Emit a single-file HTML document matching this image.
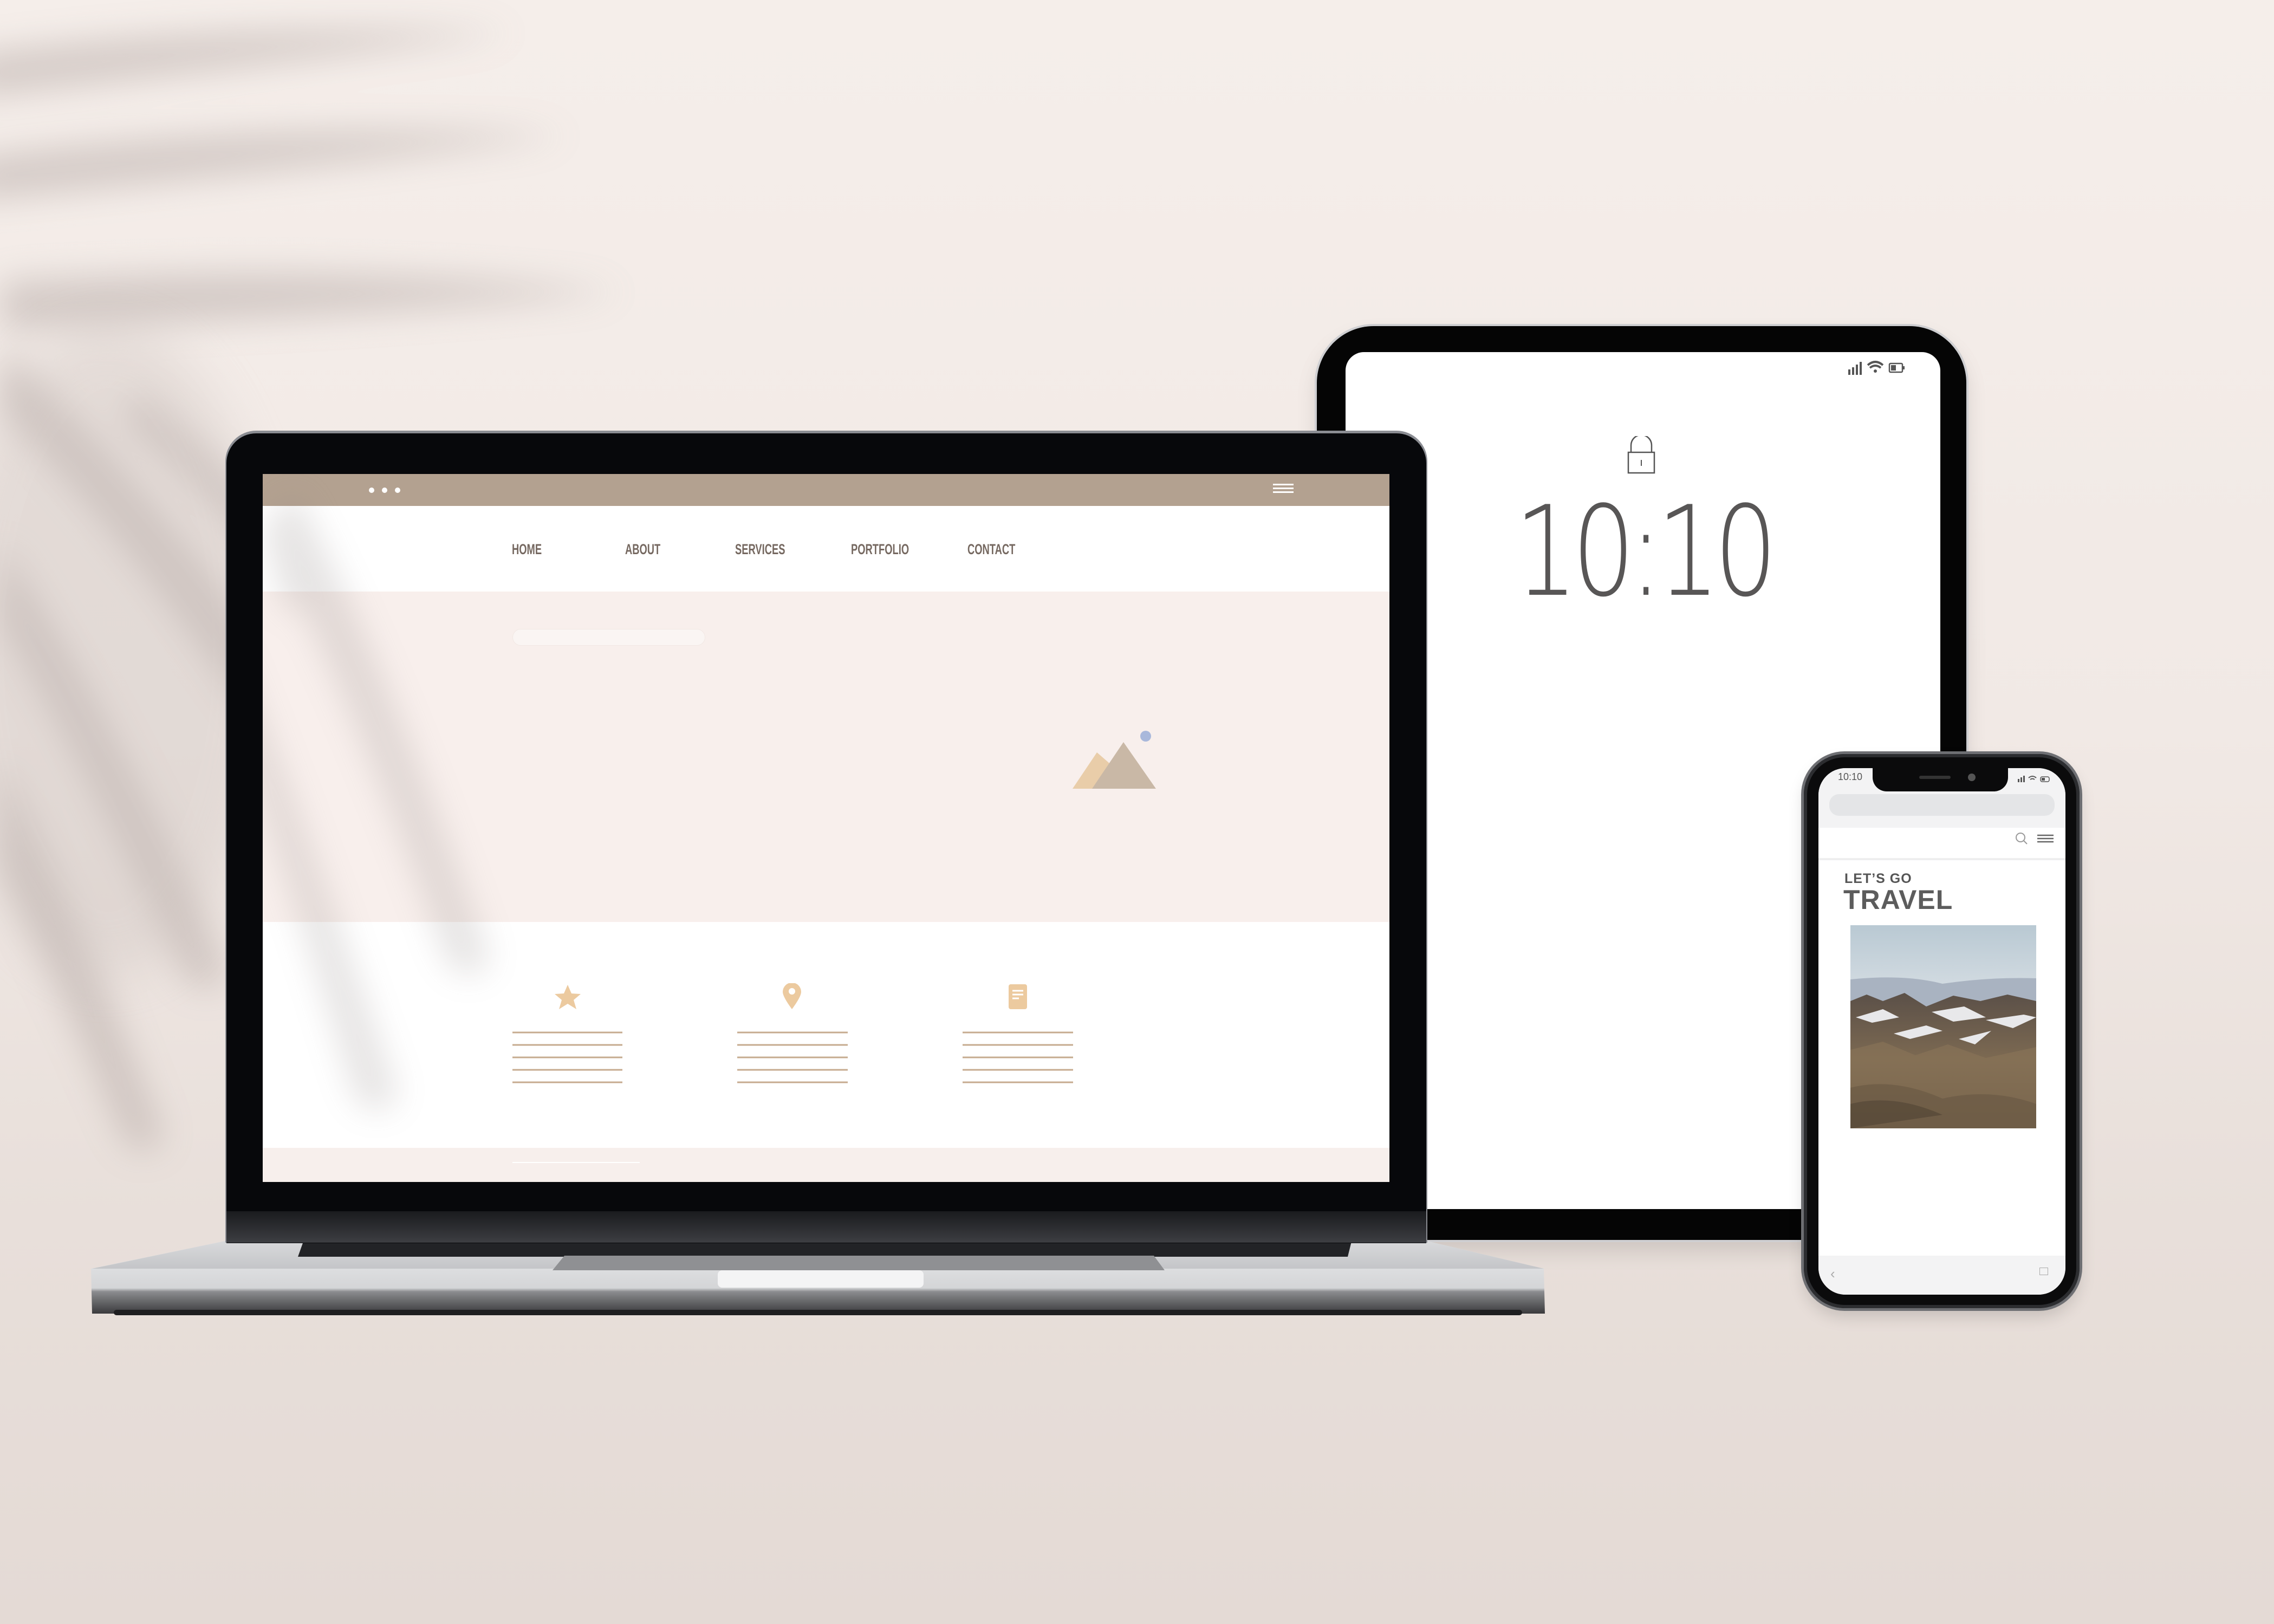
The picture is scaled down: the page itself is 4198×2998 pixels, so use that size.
<!DOCTYPE html>
<html><head><meta charset="utf-8"><style>
*{margin:0;padding:0;box-sizing:border-box}
body{width:4198px;height:2998px;overflow:hidden;position:relative;background:linear-gradient(180deg,#f5eeea 0%,#f1e9e5 45%,#e8dfda 75%,#e4dad5 100%);font-family:"Liberation Sans",sans-serif}
.a{position:absolute}
.nv{position:absolute;display:inline-block;transform:scaleX(0.68);transform-origin:0 0;white-space:nowrap}
</style></head><body>

<!-- palm shadow -->
<svg class="a" style="left:0;top:0" width="4198" height="2998">
<defs><filter id="b" x="-50%" y="-50%" width="200%" height="200%"><feGaussianBlur stdDeviation="32"/></filter>
<filter id="b2" x="-50%" y="-50%" width="200%" height="200%"><feGaussianBlur stdDeviation="45"/></filter></defs>
<g fill="#a89b98" opacity="0.42" filter="url(#b)">
<path d="M-50 100 Q400 40 950 60 Q500 120 -50 180Z"/>
<path d="M-50 290 Q500 220 1050 250 Q500 320 -50 370Z"/>
<path d="M0 520 Q600 480 1150 540 Q600 590 0 610Z"/>
<path d="M0 640 Q300 900 700 1500 Q650 1600 580 1500 Q250 1000 0 760Z"/>
<path d="M250 720 Q600 1000 900 1500 Q870 1580 820 1500 Q500 1000 230 780Z"/>
<path d="M0 1000 Q200 1300 420 1800 Q380 1850 340 1800 Q150 1400 0 1150Z"/>
<path d="M0 1400 Q150 1700 300 2100 Q260 2150 230 2100 Q100 1800 0 1600Z"/>
</g>
<ellipse cx="200" cy="1200" rx="300" ry="600" fill="#c9bfbb" opacity="0.35" filter="url(#b2)"/>
</svg>

<!-- TABLET -->
<div class="a" style="left:2431px;top:602px;width:1199px;height:1687px;background:#050505;border-radius:105px;box-shadow:0 0 0 4px #cfcfd2,0 20px 40px rgba(0,0,0,0.12)"></div>
<div class="a" style="left:2484px;top:650px;width:1098px;height:1582px;background:#fff;border-radius:34px"></div>
<svg class="a" style="left:3400px;top:660px" width="180" height="40">
<g fill="#555"><rect x="12" y="22" width="4" height="10"/><rect x="19" y="18" width="4" height="14"/><rect x="26" y="13" width="4" height="19"/><rect x="33" y="8" width="4" height="24"/></g>
<path d="M48 14 Q62 2 76 14 M52 19 Q62 11 72 19" stroke="#555" stroke-width="4" fill="none"/><circle cx="62" cy="25" r="3" fill="#555"/>
<rect x="88" y="11" width="24" height="16" rx="2" stroke="#555" stroke-width="2.5" fill="none"/><rect x="91" y="14" width="9" height="10" fill="#555"/><rect x="113" y="16" width="3" height="6" fill="#555"/>
</svg>
<svg class="a" style="left:3002px;top:805px" width="56" height="70">
<path d="M9 30 V17 A19 19 0 0 1 47 17 V30" stroke="#555" stroke-width="2.5" fill="none"/>
<rect x="4" y="30" width="48" height="38" stroke="#555" stroke-width="2.5" fill="#fff"/>
<line x1="28" y1="44" x2="28" y2="55" stroke="#555" stroke-width="2"/></svg>
<div class="a" style="left:2484px;top:880px;width:1098px;text-align:center;font-size:230px;line-height:280px;color:#585656;font-family:'DejaVu Sans','Liberation Sans',sans-serif;font-weight:200;letter-spacing:-14px;transform:scaleX(0.8)">10:10</div>

<!-- LAPTOP base -->
<svg class="a" style="left:150px;top:2200px" width="2720" height="240">
<defs><linearGradient id="deck" x1="0" y1="0" x2="0" y2="1"><stop offset="0" stop-color="#d9dadc"/><stop offset="1" stop-color="#c4c5c8"/></linearGradient>
<linearGradient id="front" x1="0" y1="0" x2="0" y2="1"><stop offset="0" stop-color="#e9eaec"/><stop offset="0.65" stop-color="#d4d5d7"/><stop offset="0.7" stop-color="#8b8c8f"/><stop offset="1" stop-color="#3a3a3c"/></linearGradient></defs>
<path d="M270 90 L2480 90 L2700 142 L2702 225 L20 225 L18 142Z" fill="url(#front)"/>
<path d="M270 90 L2480 90 L2700 142 L20 142Z" fill="url(#deck)"/>
<rect x="270" y="10" width="2210" height="85" fill="#1b1c1f"/>
<path d="M410 92 L2345 92 L2338 120 L400 120Z" fill="#222326"/>
<path d="M892 118 L1980 118 L2000 145 L870 145Z" fill="#8f9093"/>
<rect x="1175" y="145" width="380" height="32" rx="8" fill="#f4f4f5"/>
<rect x="60" y="218" width="2600" height="10" rx="5" fill="#1e1e20"/>
</svg>

<!-- LAPTOP lid -->
<div class="a" style="left:418px;top:800px;width:2215px;height:1495px;background:#07080b;border-radius:55px 55px 0 0;box-shadow:0 -3px 0 2px #8b8d93"></div>
<div class="a" style="left:418px;top:2236px;width:2215px;height:58px;background:linear-gradient(#1a1b1e,#3d3e42)"></div>
<div class="a" style="left:485px;top:875px;width:2080px;height:1307px;background:#fff;overflow:hidden">
 <div class="a" style="left:0;top:0;width:2080px;height:59px;background:#b3a190"></div>
 <div class="a" style="left:196px;top:25px;width:10px;height:10px;border-radius:50%;background:#fff"></div>
 <div class="a" style="left:220px;top:25px;width:10px;height:10px;border-radius:50%;background:#fff"></div>
 <div class="a" style="left:244px;top:25px;width:10px;height:10px;border-radius:50%;background:#fff"></div>
 <div class="a" style="left:1865px;top:18px;width:38px;height:3px;background:#fff;box-shadow:0 7px 0 #fff,0 14px 0 #fff"></div>
 <div class="a" style="left:0;top:59px;width:2080px;height:158px;background:#fff"></div>
 <div class="a" style="top:124px;left:0;width:2080px;font-size:27px;color:#756860;font-weight:bold">
  <span class="nv" style="left:460px">HOME</span><span class="nv" style="left:669px">ABOUT</span><span class="nv" style="left:872px">SERVICES</span><span class="nv" style="left:1086px">PORTFOLIO</span><span class="nv" style="left:1301px">CONTACT</span></div>
 <div class="a" style="left:0;top:217px;width:2080px;height:610px;background:#f8efec"></div>
 <div class="a" style="left:461px;top:286px;width:356px;height:31px;border-radius:16px;background:#faf5f3;border:1px solid #f1e8e4"></div>
 <svg class="a" style="left:1480px;top:470px" width="180" height="120">
  <path d="M15 111 L60 44 L90 70 L105 111Z" fill="#e9cda9"/>
  <path d="M51 111 L109 25 L169 111Z" fill="#c9b8a6"/>
  <circle cx="150" cy="14" r="10" fill="#a9b8db"/></svg>
 <div class="a" style="left:0;top:827px;width:2080px;height:417px;background:#fff"></div>
 <svg class="a" style="left:0;top:940px" width="2080" height="200">
  <path d="M563 3 L570 19 L587 20 L574 31 L579 48 L563 38 L547 48 L552 31 L539 20 L556 19Z" fill="#ecca9f"/>
  <path d="M977 48 Q960 25 960 16 A17 17 0 0 1 994 16 Q994 25 977 48Z" fill="#ecca9f"/><circle cx="977" cy="15" r="6" fill="#fff"/>
  <rect x="1377" y="2" width="34" height="46" rx="4" fill="#ecca9f"/>
  <g stroke="#fff" stroke-width="3"><line x1="1384" y1="14" x2="1404" y2="14"/><line x1="1384" y1="21" x2="1404" y2="21"/><line x1="1384" y1="28" x2="1396" y2="28"/></g>
  <g stroke="#c6ab8f" stroke-width="3">
   <line x1="461" y1="91" x2="664" y2="91"/><line x1="461" y1="114" x2="664" y2="114"/><line x1="461" y1="137" x2="664" y2="137"/><line x1="461" y1="160" x2="664" y2="160"/><line x1="461" y1="183" x2="664" y2="183"/>
   <line x1="876" y1="91" x2="1080" y2="91"/><line x1="876" y1="114" x2="1080" y2="114"/><line x1="876" y1="137" x2="1080" y2="137"/><line x1="876" y1="160" x2="1080" y2="160"/><line x1="876" y1="183" x2="1080" y2="183"/>
   <line x1="1292" y1="91" x2="1496" y2="91"/><line x1="1292" y1="114" x2="1496" y2="114"/><line x1="1292" y1="137" x2="1496" y2="137"/><line x1="1292" y1="160" x2="1496" y2="160"/><line x1="1292" y1="183" x2="1496" y2="183"/></g></svg>
 <div class="a" style="left:0;top:1244px;width:2080px;height:63px;background:#f7efec"></div>
 <div class="a" style="left:461px;top:1270px;width:235px;height:2px;background:#fff"></div>
 <svg class="a" style="left:0;top:0" width="2080" height="1307"><defs><filter id="b3" x="-50%" y="-50%" width="200%" height="200%"><feGaussianBlur stdDeviation="30"/></filter></defs>
 <g fill="#8f8684" opacity="0.22" filter="url(#b3)">
 <path d="M60 30 Q250 400 420 900 Q380 950 340 900 Q180 450 0 100Z"/>
 <path d="M-60 300 Q100 700 250 1150 Q210 1200 170 1150 Q50 750 -60 450Z"/>
 <path d="M0 100 Q60 100 100 250 L40 250Z"/></g></svg>
</div>

<!-- PHONE -->
<div class="a" style="left:3330px;top:1392px;width:509px;height:1023px;background:#0b0b0c;border-radius:75px;box-shadow:0 0 0 5px #6e6f73,inset 0 0 0 6px #2c2d30,0 15px 30px rgba(0,0,0,0.15)"></div>
<div class="a" style="left:3357px;top:1418px;width:456px;height:972px;background:#fff;border-radius:50px;overflow:hidden">
 <div class="a" style="left:0;top:0;width:456px;height:110px;background:#f3f3f4"></div>
 <div class="a" style="left:20px;top:48px;width:416px;height:40px;border-radius:18px;background:#e4e5e7"></div>
 <div class="a" style="left:100px;top:-2px;width:250px;height:45px;background:#0b0b0c;border-radius:0 0 26px 26px"></div>
 <div class="a" style="left:186px;top:14px;width:58px;height:6px;border-radius:3px;background:#333"></div>
 <div class="a" style="left:276px;top:10px;width:14px;height:14px;border-radius:50%;background:#555"></div>
 <div class="a" style="left:36px;top:6px;font-size:18px;color:#555">10:10</div>
 <svg class="a" style="left:360px;top:10px" width="90" height="20"><g fill="#555"><rect x="8" y="10" width="3" height="6"/><rect x="13" y="7" width="3" height="9"/><rect x="18" y="4" width="3" height="12"/></g><path d="M28 8 Q35 2 42 8 M31 11 Q35 8 39 11" stroke="#555" stroke-width="2" fill="none"/><rect x="50" y="6" width="16" height="9" rx="3" stroke="#555" stroke-width="1.5" fill="none"/><rect x="52" y="8" width="6" height="5" fill="#555"/></svg>
 <svg class="a" style="left:360px;top:116px" width="90" height="30"><circle cx="13" cy="12" r="8" stroke="#999" stroke-width="2" fill="none"/><line x1="19" y1="18" x2="25" y2="24" stroke="#999" stroke-width="2"/><g stroke="#666" stroke-width="2.5"><line x1="44" y1="8" x2="74" y2="8"/><line x1="44" y1="14" x2="74" y2="14"/><line x1="44" y1="20" x2="74" y2="20"/></g></svg>
 <div class="a" style="left:0;top:166px;width:456px;height:4px;background:#eeeeef"></div>
 <div class="a" style="left:48px;top:190px;font-size:25px;font-weight:bold;color:#555;letter-spacing:1px">LET’S GO</div>
 <div class="a" style="left:46px;top:214px;font-size:50px;font-weight:bold;color:#5c5c5c;letter-spacing:1px">TRAVEL</div>
 <svg class="a" style="left:59px;top:290px" width="343" height="375" preserveAspectRatio="none" viewBox="0 0 343 375">
  <defs><linearGradient id="sky" x1="0" y1="0" x2="0" y2="1"><stop offset="0" stop-color="#b9c9d3"/><stop offset="0.5" stop-color="#e2e6ea"/><stop offset="1" stop-color="#cdd2d8"/></linearGradient>
  <linearGradient id="mt" x1="0" y1="0" x2="0" y2="1"><stop offset="0" stop-color="#5b5048"/><stop offset="0.5" stop-color="#7d6a52"/><stop offset="1" stop-color="#5e4e3c"/></linearGradient></defs>
  <rect width="343" height="375" fill="url(#sky)"/>
  <path d="M0 100 Q100 90 170 108 Q260 95 343 98 L343 160 L0 160Z" fill="#a9b3c1"/>
  <path d="M0 140 L30 128 L60 140 L100 125 L140 150 L190 130 L240 140 L290 128 L343 140 L343 375 L0 375Z" fill="url(#mt)"/>
  <path d="M10 170 L60 155 L90 170 L40 180Z M150 160 L210 150 L250 170 L190 178Z M250 175 L320 165 L343 170 L300 190Z M80 200 L140 185 L170 195 L110 210Z M200 210 L260 195 L230 220Z" fill="#e8e8ea"/>
  <path d="M0 230 L60 215 L120 240 L180 220 L250 245 L343 225 L343 375 L0 375Z" fill="#8a7558" opacity="0.6"/>
  <path d="M0 300 Q80 280 170 320 Q260 300 343 330 L343 375 L0 375Z" fill="#6b5a44" opacity="0.7"/>
  <path d="M0 330 Q80 310 170 350 L0 375Z" fill="#4a3d30" opacity="0.5"/>
 </svg>
 <div class="a" style="left:0;top:900px;width:456px;height:72px;background:#f3f3f4"></div>
 <div class="a" style="left:22px;top:918px;font-size:26px;color:#aaa">‹</div>
 <div class="a" style="left:408px;top:922px;width:16px;height:14px;border:1.5px solid #aaa"></div>
</div>

</body></html>
